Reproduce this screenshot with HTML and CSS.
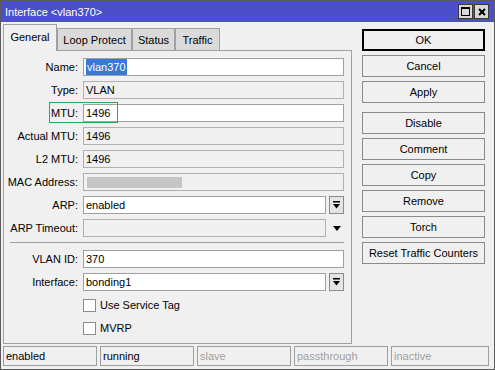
FILE: index.html
```html
<!DOCTYPE html>
<html lang="en">
<head>
    <meta charset="UTF-8">
    <title>Interface &lt;vlan370&gt;</title>
    <link rel="stylesheet" href="styles.css">
</head>
<body>
    <div class="window">
        <div class="titlebar">
            <span class="title">Interface &lt;vlan370&gt;</span>
            <div class="title-buttons">
                <span class="tbtn">
                    <svg width="9" height="9" viewBox="0 0 9 9"><rect x="0.5" y="0.5" width="8" height="8" fill="none" stroke="#000"/><rect x="0" y="0" width="9" height="2" fill="#000"/></svg>
                </span>
                <span class="tbtn">
                    <svg width="8" height="8" viewBox="0 0 8 8"><path d="M1 1 L7 7 M7 1 L1 7" stroke="#000" stroke-width="2"/></svg>
                </span>
            </div>
        </div>

        <div class="main">
            <div class="left">
                <div class="tabs">
                    <div class="tab active tab-general">General</div>
                    <div class="tab tab-loop">Loop Protect</div>
                    <div class="tab tab-status">Status</div>
                    <div class="tab tab-traffic">Traffic</div>
                </div>

                <div class="panel">
                    <div class="row">
                        <label>Name:</label>
                        <div class="field"><span class="sel">vlan370</span></div>
                    </div>
                    <div class="row">
                        <label>Type:</label>
                        <div class="field ro">VLAN</div>
                    </div>
                    <div class="row mtu">
                        <label>MTU:</label>
                        <div class="field">1496</div>
                        <span class="highlight"></span>
                    </div>
                    <div class="row">
                        <label>Actual MTU:</label>
                        <div class="field ro">1496</div>
                    </div>
                    <div class="row">
                        <label>L2 MTU:</label>
                        <div class="field ro">1496</div>
                    </div>
                    <div class="row">
                        <label>MAC Address:</label>
                        <div class="field ro"><span class="mask"></span></div>
                    </div>
                    <div class="row">
                        <label>ARP:</label>
                        <div class="field short">enabled</div>
                        <span class="dd">
                            <svg width="7" height="8" viewBox="0 0 7 8"><rect x="0" y="0" width="7" height="1.5" fill="#000"/><path d="M0 3 L7 3 L3.5 7.5 Z" fill="#000"/></svg>
                        </span>
                    </div>
                    <div class="row">
                        <label>ARP Timeout:</label>
                        <div class="field short ro"></div>
                        <span class="dd plain">
                            <svg width="8" height="5" viewBox="0 0 8 5"><path d="M0 0 L8 0 L4 5 Z" fill="#000"/></svg>
                        </span>
                    </div>

                    <div class="sep"></div>

                    <div class="row">
                        <label>VLAN ID:</label>
                        <div class="field">370</div>
                    </div>
                    <div class="row">
                        <label>Interface:</label>
                        <div class="field short">bonding1</div>
                        <span class="dd">
                            <svg width="7" height="8" viewBox="0 0 7 8"><rect x="0" y="0" width="7" height="1.5" fill="#000"/><path d="M0 3 L7 3 L3.5 7.5 Z" fill="#000"/></svg>
                        </span>
                    </div>
                    <div class="row check">
                        <span class="box"></span>
                        <span>Use Service Tag</span>
                    </div>
                    <div class="row check">
                        <span class="box"></span>
                        <span>MVRP</span>
                    </div>
                </div>
            </div>

            <div class="buttons">
                <div class="btn default">OK</div>
                <div class="btn">Cancel</div>
                <div class="btn">Apply</div>
                <div class="btn spaced">Disable</div>
                <div class="btn">Comment</div>
                <div class="btn">Copy</div>
                <div class="btn">Remove</div>
                <div class="btn">Torch</div>
                <div class="btn">Reset Traffic Counters</div>
            </div>
        </div>

        <div class="statusbar">
            <div class="cell">enabled</div>
            <div class="cell">running</div>
            <div class="cell dim">slave</div>
            <div class="cell dim">passthrough</div>
            <div class="cell dim last">inactive</div>
        </div>
    </div>
</body>
</html>
```

FILE: styles.css
```css
* {
    margin: 0;
    padding: 0;
    box-sizing: border-box;
}

body {
    font-family: "Liberation Sans", Arial, sans-serif;
    font-size: 11px;
    color: #000;
    background: #f0f0f0;
}

.window {
    width: 495px;
    height: 370px;
    border: 1px solid #5a5a5a;
    background: #f0f0f0;
    display: flex;
    flex-direction: column;
}

/* title bar */
.titlebar {
    height: 21px;
    background: #4b4fc9;
    color: #fff;
    display: flex;
    align-items: center;
    justify-content: space-between;
    padding: 0 5px 0 4px;
}

.title-buttons {
    display: flex;
    gap: 1px;
}

.tbtn {
    width: 15px;
    height: 15px;
    background: #d8d8d8;
    border: 1px solid #3a3a3a;
    display: flex;
    align-items: center;
    justify-content: center;
}

/* main area */
.main {
    display: flex;
    height: 322px;
    padding-left: 2px;
}

.left {
    width: 349px;
    display: flex;
    flex-direction: column;
}

.tabs {
    display: flex;
    align-items: flex-end;
    height: 28px;
}

.tab {
    height: 22px;
    border: 1px solid #a0a0a0;
    border-bottom: none;
    background: #dadada;
    display: flex;
    align-items: center;
    justify-content: center;
    padding-top: 1px;
}

.tab.active {
    height: 27px;
    margin-bottom: -1px;
    background: #f0f0f0;
    position: relative;
    z-index: 1;
    padding-top: 0;
    padding-bottom: 2px;
}

.tab-general { width: 54px; }
.tab-loop { width: 75px; }
.tab-status { width: 43px; }
.tab-traffic { width: 45px; }

.panel {
    height: 294px;
    border: 1px solid #a0a0a0;
    padding: 7px 7px 0 0;
}

.row {
    display: flex;
    align-items: center;
    height: 18px;
    margin-bottom: 5px;
}

.row label {
    width: 74px;
    margin-right: 5px;
    text-align: right;
}

.field {
    width: 261px;
    height: 18px;
    border: 1px solid #a0a0a0;
    background: #fff;
    padding-left: 2px;
    display: flex;
    align-items: center;
}

.field.ro {
    background: #f0f0f0;
    border-color: #b0b0b0;
}

.field.short {
    width: 243px;
}

.sel {
    background: #3a78d5;
    color: #fff;
    padding: 0 1px;
    line-height: 16px;
}

.mask {
    width: 95px;
    height: 11px;
    background: #c6c6c6;
    margin-left: 1px;
}

.dd {
    width: 15px;
    height: 18px;
    margin-left: 3px;
    border: 1px solid #8c8c8c;
    background: #e4e4e4;
    display: flex;
    align-items: center;
    justify-content: center;
}

.dd.plain {
    border: none;
    background: none;
}

.mtu {
    position: relative;
}

.highlight {
    position: absolute;
    left: 45px;
    top: -2px;
    width: 69px;
    height: 21px;
    border: 1px solid #2fa84f;
}

.sep {
    height: 1px;
    background: #a0a0a0;
    margin: 0 0 7px 6px;
}

.check {
    padding-left: 79px;
}

.box {
    width: 13px;
    height: 13px;
    border: 1px solid #8c8c8c;
    background: #fff;
    margin-right: 4px;
}

/* right button column */
.buttons {
    width: 123px;
    margin-left: 10px;
    padding-top: 7px;
    display: flex;
    flex-direction: column;
    gap: 4px;
}

.btn {
    height: 22px;
    border: 1px solid #8a8a8a;
    background: #f0f0f0;
    display: flex;
    align-items: center;
    justify-content: center;
}

.btn.default {
    border: 2px solid #000;
}

.btn.spaced {
    margin-top: 5px;
}

/* status bar */
.statusbar {
    display: flex;
    gap: 3px;
    height: 20px;
    margin-top: 2px;
    padding: 0 5px 0 2px;
}

.cell {
    width: 94px;
    border: 1px solid #a0a0a0;
    padding-left: 2px;
    display: flex;
    align-items: center;
}

.cell.dim {
    color: #a0a0a0;
}

.cell.last {
    flex: 1;
}
```
